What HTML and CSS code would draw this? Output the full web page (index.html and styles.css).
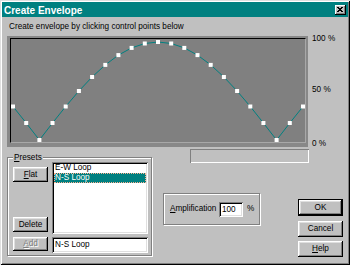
FILE: index.html
```html
<!DOCTYPE html>
<html>
<head>
<meta charset="utf-8">
<link rel="stylesheet" href="styles.css">
</head>
<body>
<div class="window">
  <div class="titlebar">
    <span class="title">Create Envelope</span>
    <span class="close"><svg width="6" height="5" viewBox="0 0 6 5"><path d="M0 0L5 5M1 0L6 5M5 0L0 5M6 0L1 5" stroke="#000" stroke-width="1"/></svg></span>
  </div>
  <div class="caption">Create envelope by clicking control points below</div>
  <div class="graph-row">
    <div class="graph-frame">
      <div class="graph">
        <svg class="plot" width="294" height="103" viewBox="11 39 294 103">
          <polyline fill="none" stroke="#008080" stroke-width="1" points="13,106.5 26.2,123 39.4,140 52.5,123 65.7,106.5 78.9,91 92.1,77 105.3,64.9 118.4,55.1 131.6,47.9 144.8,43.5 158,42 171.2,43.5 184.3,47.9 197.5,55.1 210.7,64.9 223.9,77 237.1,91 250.3,106.5 263.4,123 276.6,140 289.8,123 303,106.5"/>
          <g fill="#fff">
            <rect x="11" y="104.5" width="4" height="4"/>
            <rect x="24.2" y="121" width="4" height="4"/>
            <rect x="37.4" y="138" width="4" height="4"/>
            <rect x="50.5" y="121" width="4" height="4"/>
            <rect x="63.7" y="104.5" width="4" height="4"/>
            <rect x="76.9" y="89" width="4" height="4"/>
            <rect x="90.1" y="75" width="4" height="4"/>
            <rect x="103.3" y="62.9" width="4" height="4"/>
            <rect x="116.4" y="53.1" width="4" height="4"/>
            <rect x="129.6" y="45.9" width="4" height="4"/>
            <rect x="142.8" y="41.5" width="4" height="4"/>
            <rect x="156" y="40" width="4" height="4"/>
            <rect x="169.2" y="41.5" width="4" height="4"/>
            <rect x="182.3" y="45.9" width="4" height="4"/>
            <rect x="195.5" y="53.1" width="4" height="4"/>
            <rect x="208.7" y="62.9" width="4" height="4"/>
            <rect x="221.9" y="75" width="4" height="4"/>
            <rect x="235.1" y="89" width="4" height="4"/>
            <rect x="248.3" y="104.5" width="4" height="4"/>
            <rect x="261.4" y="121" width="4" height="4"/>
            <rect x="274.6" y="138" width="4" height="4"/>
            <rect x="287.8" y="121" width="4" height="4"/>
            <rect x="301" y="104.5" width="4" height="4"/>
          </g>
        </svg>
      </div>
    </div>
    <div class="scale">
      <span class="s100">100 %</span>
      <span class="s50">50 %</span>
      <span class="s0">0 %</span>
    </div>
  </div>
  <div class="lower">
    <div class="group presets">
      <div class="group-label"><u>P</u>resets</div>
      <div class="presets-grid">
        <div class="btn-col">
          <div class="btn flat"><u>F</u>lat</div>
          <div class="btn delete">Delete</div>
        </div>
        <div class="listbox">
          <div class="item">E-W Loop</div>
          <div class="item selected">N-S Loop</div>
        </div>
        <div class="btn add disabled"><u>A</u>dd</div>
        <div class="edit name">N-S Loop</div>
      </div>
    </div>
    <div class="right">
      <div class="status"></div>
      <div class="right-row">
        <div class="group amp">
          <span class="amp-label"><u>A</u>mplification</span>
          <div class="edit amp-edit">100</div>
          <span class="pct">%</span>
        </div>
        <div class="buttons">
          <div class="btn ok">OK</div>
          <div class="btn cancel">Cancel</div>
          <div class="btn help"><u>H</u>elp</div>
        </div>
      </div>
    </div>
  </div>
</div>
</body>
</html>
```

FILE: styles.css
```css
html, body {
  margin: 0;
  padding: 0;
  background: #c0c0c0;
}

.window {
  width: 350px;
  height: 265px;
  box-sizing: border-box;
  padding: 2px;
  background: #c0c0c0;
  box-shadow: inset 1px 1px #dfdfdf, inset -1px -1px #000, inset 2px 2px #fff, inset -2px -2px #808080;
  font-family: "Liberation Sans", Arial, sans-serif;
  font-size: 8.2px;
  color: #000;
  overflow: hidden;
}

.titlebar {
  height: 15px;
  background: #008080;
  display: flex;
  align-items: center;
}

.title {
  color: #fff;
  font-weight: bold;
  font-size: 10px;
  line-height: 15px;
  padding: 1px 0 0 2px;
}

.close {
  margin-left: auto;
  margin-right: 2px;
  width: 11px;
  height: 10px;
  box-sizing: border-box;
  background: #c0c0c0;
  box-shadow: inset -1px -1px #000, inset 1px 1px #fff, inset -2px -2px #808080;
  display: flex;
  align-items: center;
  justify-content: center;
  padding: 0 1px 1px 0;
}

.close svg {
  display: block;
}

.caption {
  margin: 5px 0 0 7px;
  line-height: 10px;
  white-space: nowrap;
}

.graph-row {
  display: flex;
  margin-top: 4px;
  height: 111px;
}

.graph-frame {
  margin-left: 5px;
  width: 301px;
  height: 111px;
  box-sizing: border-box;
  border-style: solid;
  border-color: #888;
  border-width: 2px 2px 4px 3px;
  background: #808080;
}

.graph {
  height: 100%;
  box-sizing: border-box;
  background: #808080;
  border-top: 1px solid #000;
  border-left: 1px solid #000;
  border-right: 1px solid #a8a8a8;
  border-bottom: 1px solid #a8a8a8;
}

.plot {
  display: block;
  overflow: visible;
}

.scale {
  margin-left: 4px;
  display: flex;
  flex-direction: column;
  line-height: 10px;
  white-space: nowrap;
}

.s100 { margin-top: -2px; }
.s50 { margin-top: 41px; }
.s0 { margin-top: 44px; }

.lower {
  display: flex;
}

.group {
  box-sizing: border-box;
  border: 1px solid #808080;
  box-shadow: inset 1px 1px #fff, 1px 1px #fff;
}

.presets {
  margin: 10px 0 0 5px;
  width: 145px;
  height: 99px;
}

.group-label {
  width: fit-content;
  margin: -5px 0 0 5px;
  padding: 0 1px;
  line-height: 9px;
  background: #c0c0c0;
}

.presets-grid {
  margin-left: 5px;
  display: grid;
  grid-template-columns: 35px 96px;
  grid-template-rows: 72px 16px;
  column-gap: 4px;
  row-gap: 3px;
}

.btn-col {
  display: flex;
  flex-direction: column;
  justify-content: space-between;
}

.btn {
  box-sizing: border-box;
  height: 15px;
  line-height: 15px;
  text-align: center;
  background: #c0c0c0;
  box-shadow: inset -1px -1px #000, inset 1px 1px #fff, inset -2px -2px #808080, inset 2px 2px #dfdfdf;
  white-space: nowrap;
}

.flat { margin-top: 5px; }
.delete { margin-bottom: 2px; }

.add {
  height: 14px;
  line-height: 14px;
}

.disabled {
  color: #808080;
  text-shadow: 1px 1px #fff;
}

.listbox, .edit {
  box-sizing: border-box;
  background: #fff;
  box-shadow: inset 1px 1px #808080, inset -1px -1px #fff, inset 2px 2px #000, inset -2px -2px #dfdfdf;
}

.listbox {
  padding: 1px 2px;
}

.item {
  height: 10px;
  line-height: 10px;
  padding-left: 1px;
  white-space: nowrap;
}

.selected {
  background: #008080;
  color: #fff;
  outline: 1px dotted #ffb090;
  outline-offset: -1px;
}

.name {
  height: 16px;
  line-height: 16px;
  padding-left: 3px;
}

.right {
  display: flex;
  flex-direction: column;
}

.status {
  margin: 2px 0 0 38px;
  width: 119px;
  height: 14px;
  box-sizing: border-box;
  box-shadow: inset 1px 1px #808080, inset -1px -1px #fff;
}

.right-row {
  display: flex;
}

.amp {
  margin: 30px 0 0 11px;
  width: 97px;
  height: 32px;
  display: flex;
  align-items: center;
  padding-left: 6px;
  line-height: 10px;
}

.amp-label {
  width: 49px;
  white-space: nowrap;
}

.amp-edit {
  width: 24px;
  height: 15px;
  line-height: 15px;
  padding-left: 3px;
}

.pct {
  margin-left: 4px;
}

.buttons {
  margin: 36px 0 0 38px;
  width: 45px;
  display: flex;
  flex-direction: column;
}

.ok {
  height: 17px;
  line-height: 15px;
  border: 1px solid #000;
}

.cancel {
  margin-top: 5px;
  height: 16px;
  line-height: 16px;
}

.help {
  margin-top: 4px;
  height: 16px;
  line-height: 16px;
}
```
